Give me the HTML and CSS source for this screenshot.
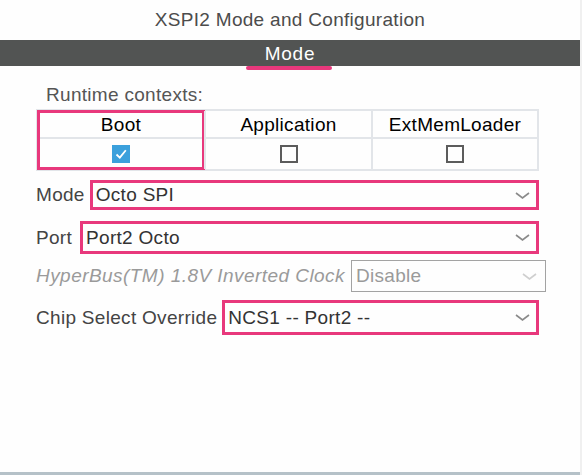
FILE: index.html
```html
<!DOCTYPE html>
<html lang="en">
<head>
  <meta charset="UTF-8" />
  <title>XSPI2 Mode and Configuration</title>
  <link rel="stylesheet" href="styles.css">
</head>
<body>
  <div class="page">
    <div class="title">XSPI2 Mode and Configuration</div>

    <!-- === TAB BAR === -->
    <div class="tab-bar">Mode</div>
    <div class="tab-underline"></div>

    <div class="contexts-label">Runtime contexts:</div>
    <div class="contexts">
      <div class="ctx-col hl">
        <div class="ctx-head">Boot</div>
        <div class="ctx-cell">
          <span class="check on">
            <svg width="18" height="18" viewBox="0 0 18 18"><polyline points="4.5,9.5 7.8,12.6 13.8,5.2" fill="none" stroke="#fff" stroke-width="1.8"/></svg>
          </span>
        </div>
      </div>
      <div class="ctx-col">
        <div class="ctx-head">Application</div>
        <div class="ctx-cell"><span class="check"></span></div>
      </div>
      <div class="ctx-col">
        <div class="ctx-head">ExtMemLoader</div>
        <div class="ctx-cell"><span class="check"></span></div>
      </div>
    </div>

    <!-- === FIELDS === -->
    <div class="field field-mode">
      <span class="label">Mode</span>
      <div class="select hl">
        <span>Octo SPI</span>
        <svg class="chev" width="15" height="7" viewBox="0 0 15 7"><polyline points="1,1 7.5,6 14,1" fill="none" stroke="#8a8a8a" stroke-width="1.6"/></svg>
      </div>
    </div>

    <div class="field field-port">
      <span class="label">Port</span>
      <div class="select hl">
        <span>Port2 Octo</span>
        <svg class="chev" width="15" height="7" viewBox="0 0 15 7"><polyline points="1,1 7.5,6 14,1" fill="none" stroke="#8a8a8a" stroke-width="1.6"/></svg>
      </div>
    </div>

    <div class="field field-hyper disabled">
      <span class="label">HyperBus(TM) 1.8V Inverted Clock</span>
      <div class="select">
        <span>Disable</span>
        <svg class="chev" width="15" height="7" viewBox="0 0 15 7"><polyline points="1,1 7.5,6 14,1" fill="none" stroke="#cfcfcf" stroke-width="1.6"/></svg>
      </div>
    </div>

    <div class="field field-chip">
      <span class="label">Chip Select Override</span>
      <div class="select hl">
        <span>NCS1 -- Port2 --</span>
        <svg class="chev" width="15" height="7" viewBox="0 0 15 7"><polyline points="1,1 7.5,6 14,1" fill="none" stroke="#8a8a8a" stroke-width="1.6"/></svg>
      </div>
    </div>
  </div>
</body>
</html>
```

FILE: styles.css
```css
:root {
  --pink: #e8387c;
  --grid: #e2e5e9;
  --text: #444444;
}

body {
  margin: 0;
  background-color: #f0f0f0;
  font-family: 'Liberation Sans', Arial, sans-serif;
  font-size: 19px;
  letter-spacing: 0.3px;
  color: var(--text);
}

.page {
  width: 580px;
  height: 475px;
  box-sizing: border-box;
  background-color: #fefefe;
  border-bottom: 3px solid #b5c1c8;
}

/* === HEADER === */
.title {
  height: 40px;
  line-height: 40px;
  text-align: center;
  color: #4c4c4c;
}

.tab-bar {
  height: 26px;
  line-height: 27px;
  background-color: #525453;
  color: #ffffff;
  text-align: center;
  letter-spacing: 0.8px;
}

.tab-underline {
  width: 86px;
  height: 4px;
  margin-left: 246px;
  background-color: var(--pink);
  border-radius: 2px;
}

/* === RUNTIME CONTEXTS === */
.contexts-label {
  margin: 14px 0 0 46px;
  line-height: 22px;
  height: 25px;
  color: #555555;
}

.contexts {
  display: grid;
  grid-template-columns: 166px 167px 166px;
  width: 503px;
  margin-left: 36px;
  box-sizing: border-box;
  border: 2px solid var(--grid);
}

.ctx-col + .ctx-col {
  border-left: 2px solid var(--grid);
}

.ctx-col.hl {
  outline: 3px solid var(--pink);
  outline-offset: -2px;
}

.ctx-head {
  height: 26px;
  line-height: 27px;
  text-align: center;
  color: #000000;
  border-bottom: 2px solid var(--grid);
}

.ctx-cell {
  height: 30px;
  display: flex;
  align-items: center;
  justify-content: center;
}

.check {
  width: 18px;
  height: 18px;
  box-sizing: border-box;
  border: 2px solid #5c5c5c;
  display: block;
}

.check.on {
  border: none;
  background-color: #3ba0dc;
}

.check svg {
  display: block;
}

/* === FIELDS === */
.field {
  display: flex;
  align-items: center;
  gap: 5px;
  width: 503px;
  margin-left: 36px;
}

.field-mode { margin-top: 9px; height: 30px; }
.field-port { margin-top: 11px; height: 33px; gap: 8px; }
.field-hyper { margin-top: 6px; height: 32px; gap: 6px; }
.field-chip { margin-top: 8px; height: 35px; }

.select {
  flex: 1;
  height: 100%;
  box-sizing: border-box;
  display: flex;
  align-items: center;
  justify-content: space-between;
  border: 1px solid #a3a3a3;
  padding: 0 8px 0 4px;
  color: #333333;
}

.select.hl {
  border: 3px solid var(--pink);
  padding: 0 6px 0 3px;
}

.chev {
  display: block;
}

.disabled .label {
  font-style: italic;
  color: #9a9a9a;
  letter-spacing: 0.45px;
}

.disabled .select {
  color: #9a9a9a;
  margin-right: -7px;
}
```
